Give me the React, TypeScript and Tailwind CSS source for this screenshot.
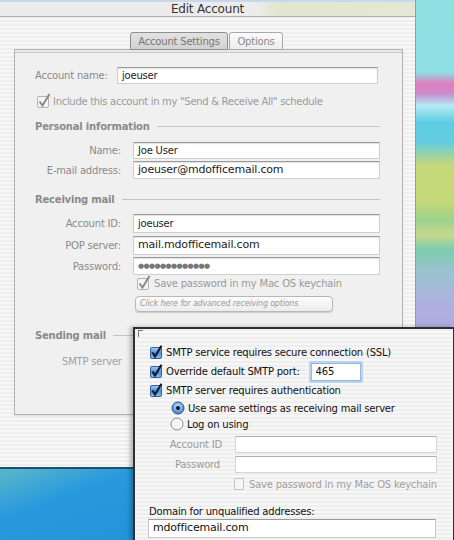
import React from 'react';

const stripes =
  'bg-[repeating-linear-gradient(180deg,#eeeeee_0px,#eeeeee_2px,#f7f7f7_2px,#f7f7f7_4px)]';

const Field = ({ w, h = 18, big, children }: { w: number; h?: number; big?: boolean; children?: React.ReactNode }) => (
  <div
    style={{ width: w, height: h }}
    className={`bg-white border border-[#cfcfcf] border-t-[#9a9a9a] shadow-[inset_0_1px_1px_rgba(0,0,0,0.12)] flex items-center pl-1 text-[#222] ${
      big ? 'text-[11px]' : 'text-[10px]'
    }`}
  >
    {children}
  </div>
);

const GrayCheck = ({ checked = true }: { checked?: boolean }) => (
  <svg width="16" height="16" viewBox="0 0 16 16" className="shrink-0">
    <rect x="1.5" y="3.5" width="11" height="11" rx="1.5" fill="#f4f4f4" stroke="#b4b4b4" />
    {checked && <path d="M3.5 8.5 L6.5 12.5 L13.5 1" fill="none" stroke="#8a8a8a" strokeWidth="2" />}
  </svg>
);

const AquaCheck = () => (
  <svg width="15" height="15" viewBox="0 0 15 15" className="shrink-0">
    <defs>
      <linearGradient id="aq" x1="0" y1="0" x2="0" y2="1">
        <stop offset="0" stopColor="#a9cdf5" />
        <stop offset="0.5" stopColor="#4a8ee0" />
        <stop offset="1" stopColor="#86c0f5" />
      </linearGradient>
    </defs>
    <rect x="1.5" y="2.5" width="11" height="11" rx="1.5" fill="url(#aq)" stroke="#3c5f95" />
    <path d="M3.5 7.5 L6 11.5 L12.5 0.8" fill="none" stroke="#151a25" strokeWidth="2.2" />
  </svg>
);

const Radio = ({ on }: { on?: boolean }) => (
  <svg width="14" height="14" viewBox="0 0 14 14" className="shrink-0">
    <defs>
      <radialGradient id="rb" cx="0.5" cy="0.35" r="0.7">
        <stop offset="0" stopColor="#bfe0ff" />
        <stop offset="1" stopColor="#2f78d6" />
      </radialGradient>
    </defs>
    {on ? (
      <>
        <circle cx="7" cy="7" r="6" fill="url(#rb)" stroke="#2a4e85" />
        <circle cx="7" cy="7" r="2" fill="#111" />
      </>
    ) : (
      <circle cx="7" cy="7" r="6" fill="#f6f6f6" stroke="#8c8c8c" />
    )}
  </svg>
);

const Section = ({ title, mt, pr = 'pr-[22px]' }: { title: string; mt: string; pr?: string }) => (
  <div className={`${mt} h-[14px] flex items-center gap-[7px] pl-[20px] ${pr}`}>
    <span className="text-[10px] font-bold text-[#8a8a8a]">{title}</span>
    <div className="flex-1 h-px bg-[#c4c4c4]" />
  </div>
);

const Row = ({ label, mt, children }: { label: string; mt: string; children: React.ReactNode }) => (
  <div className={`${mt} flex items-center`}>
    <div className="w-[107px] text-right pr-[1px] text-[10px] text-[#8a8a8a]">{label}</div>
    <div className="ml-[11px]">{children}</div>
  </div>
);

export default function App() {
  return (
    <div className="relative w-[454px] h-[540px] overflow-hidden flex font-['DejaVu_Sans',sans-serif] tracking-[-0.2px]">
      {/* window + desktop below */}
      <div className="w-[416px] flex flex-col">
        <div className={`h-[467px] ${stripes} border-r border-[#9a9a9a] flex flex-col`}>
          {/* title bar */}
          <div className="h-[17px] border-t-2 border-[#c9d6ee] border-b border-b-[#b0b0b0] bg-[linear-gradient(90deg,#ececec_0%,#ececec_62%,#e2e6cf_67%,#e4e7d3_100%)] flex items-center justify-center">
            <span className="text-[12px] text-[#333]">Edit Account</span>
          </div>
          {/* tabs */}
          <div className="mt-[15px] h-[18px] flex pl-[130px] relative z-10">
            <div className="w-[98px] h-[18px] border border-[#8f8f8f] rounded-t-[3px] bg-[linear-gradient(180deg,#e2e2e2,#d2d2d2)] flex items-center justify-center text-[10px] text-[#777]">
              Account Settings
            </div>
            <div className="ml-[1px] w-[54px] h-[18px] border border-[#a8a8a8] rounded-t-[3px] bg-[linear-gradient(180deg,#fafafa,#ededed)] flex items-center justify-center text-[10px] text-[#888]">
              Options
            </div>
          </div>
          {/* panel */}
          <div className="-mt-[1px] ml-[14px] w-[389px] h-[366px] border border-[#b3b3b3] bg-[#f0f0f0] flex flex-col shadow-[0_1px_1px_rgba(0,0,0,0.08)]">
            <div className="h-[3px] border-b border-[#c8c8c8] bg-[#e8e8e8]" />
            <div className="mt-[14px] flex items-center pl-[20px]">
              <span className="w-[82px] text-[10px] text-[#8a8a8a]">Account name:</span>
              <Field w={261} h={17}>
                joeuser
              </Field>
            </div>
            <div className="mt-[10px] h-[14px] flex items-center pl-[21px] gap-[1px]">
              <GrayCheck />
              <span className="text-[10px] text-[#9a9a9a] tracking-[-0.3px]">Include this account in my "Send &amp; Receive All" schedule</span>
            </div>
            <Section title="Personal information" mt="mt-[11px]" />
            <Row label="Name:" mt="mt-[9px]">
              <Field w={247} h={17}>
                Joe User
              </Field>
            </Row>
            <Row label="E-mail address:" mt="mt-[2px]">
              <Field w={247} big>
                joeuser@mdofficemail.com
              </Field>
            </Row>
            <Section title="Receiving mail" mt="mt-[13px]" />
            <Row label="Account ID:" mt="mt-[8px]">
              <Field w={247} h={19}>
                joeuser
              </Field>
            </Row>
            <Row label="POP server:" mt="mt-[3px]">
              <Field w={247} h={19} big>
                mail.mdofficemail.com
              </Field>
            </Row>
            <Row label="Password:" mt="mt-[2px]">
              <Field w={247}>
                <span className="text-[7px] tracking-[-0.6px] text-[#777]">●●●●●●●●●●●●●</span>
              </Field>
            </Row>
            <div className="mt-[1px] h-[14px] flex items-center pl-[121px] gap-[2px]">
              <GrayCheck />
              <span className="text-[10px] text-[#9a9a9a]">Save password in my Mac OS keychain</span>
            </div>
            <div className="mt-[6px] ml-[120px] w-[198px] h-[16px] rounded-[4px] border border-[#b8b8b8] bg-[linear-gradient(180deg,#fdfdfd,#ececec)] shadow-[0_1px_1px_rgba(0,0,0,0.15)] flex items-center pl-[4px]">
              <span className="text-[8px] italic text-[#999]">Click here for advanced receiving options</span>
            </div>
            <Section title="Sending mail" mt="mt-[16px]" pr="pr-[267px]" />
            <div className="mt-[12px] h-[14px] flex items-center pl-[47px]">
              <span className="text-[10px] text-[#a0a0a0]">SMTP server</span>
            </div>
          </div>
        </div>
        <div className="flex-1 border-t-2 border-[#1d4f6e] bg-[linear-gradient(160deg,#5bb7c9_0%,#2a9ade_22%,#1f8fd8_70%,#2a86cf_100%)]" />
      </div>
      {/* desktop strip on the right */}
      <div className="flex-1 bg-[linear-gradient(180deg,#8fe0e2_0px,#8ddfe4_72px,#e07cbc_84px,#c890d0_94px,#b4ecf4_106px,#5ecde4_122px,#62cce0_142px,#c4d87a_165px,#c8d878_200px,#9ed28c_220px,#c6d88c_235px,#7cccb0_250px,#98c4cc_270px,#aeb2e0_300px,#aeaade_330px)]" />

      {/* sheet overlaying the window */}
      <div className={`absolute left-[133px] top-[327px] w-[321px] h-[213px] ${stripes} border-l-2 border-t-2 border-r border-[#303030] shadow-[-3px_0_4px_rgba(0,0,0,0.25)] flex flex-col`}>
        <div className="ml-[3px] mt-[1px] w-[5px] h-[7px] border-l border-t border-[#777]" />
        <div className="mt-[6px] flex flex-col text-[10px] text-[#111]">
          <div className="h-[19px] flex items-center pl-[14px] gap-[2px]">
            <AquaCheck />
            <span>SMTP service requires secure connection (SSL)</span>
          </div>
          <div className="h-[19px] flex items-center pl-[14px] gap-[2px]">
            <AquaCheck />
            <span>Override default SMTP port:</span>
            <div className="ml-[9px] w-[50px] h-[18px] bg-white border border-[#9bb8dc] shadow-[0_0_0_2px_#b9d3f1] flex items-center pl-[4px]">
              465
            </div>
          </div>
          <div className="h-[19px] flex items-center pl-[14px] gap-[2px]">
            <AquaCheck />
            <span>SMTP server requires authentication</span>
          </div>
          <div className="h-[16px] flex items-center pl-[36px] gap-[3px]">
            <Radio on />
            <span>Use same settings as receiving mail server</span>
          </div>
          <div className="h-[16px] flex items-center pl-[35px] gap-[3px]">
            <Radio />
            <span>Log on using</span>
          </div>
          <div className="mt-[4px] flex items-center">
            <div className="w-[87px] text-right text-[#9a9a9a]">Account ID</div>
            <div className="ml-[13px] w-[202px] h-[17px] bg-white border border-[#d4d4d4] border-t-[#b0b0b0]" />
          </div>
          <div className="mt-[3px] flex items-center">
            <div className="w-[85px] text-right text-[#9a9a9a]">Password</div>
            <div className="ml-[15px] w-[202px] h-[17px] bg-white border border-[#d4d4d4] border-t-[#b0b0b0]" />
          </div>
          <div className="mt-[4px] h-[14px] flex items-center pl-[99px] gap-[5px]">
            <div className="w-[10px] h-[12px] border border-[#c4c4c4] bg-[#f6f6f6] rounded-[1px]" />
            <span className="text-[#a0a0a0]">Save password in my Mac OS keychain</span>
          </div>
          <div className="mt-[13px] h-[14px] flex items-center pl-[14px]">
            <span>Domain for unqualified addresses:</span>
          </div>
          <div className="mt-[1px] ml-[13px] w-[288px] h-[19px] bg-white border border-[#c8c8c8] border-t-[#999] flex items-center pl-[4px] text-[11px]">
            mdofficemail.com
          </div>
        </div>
      </div>
    </div>
  );
}
